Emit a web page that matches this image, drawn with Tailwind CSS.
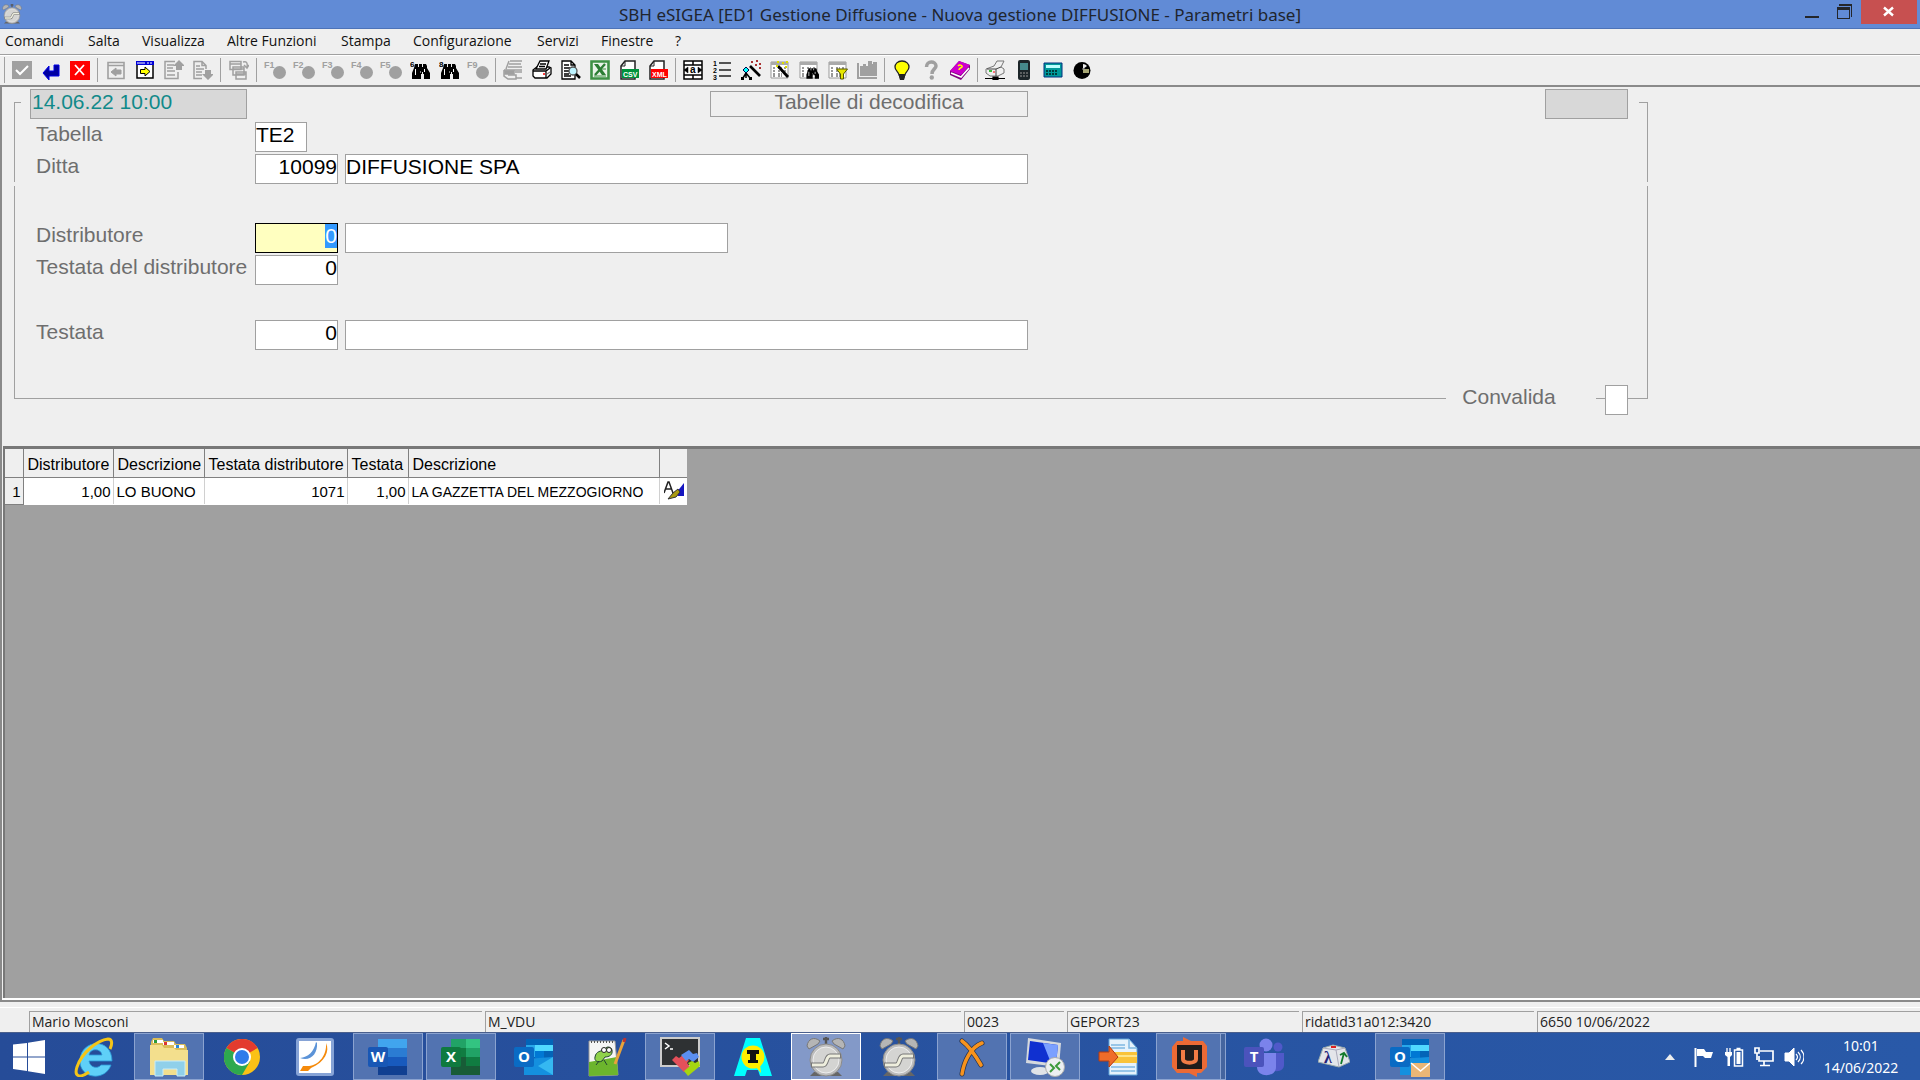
<!DOCTYPE html>
<html lang="it">
<head>
<meta charset="utf-8">
<title>SBH eSIGEA [ED1 Gestione Diffusione - Nuova gestione DIFFUSIONE - Parametri base]</title>
<script src="https://cdn.jsdelivr.net/npm/@tailwindcss/browser@4"></script>
</head>
<body class="min-h-screen flex flex-col bg-[#efefef] text-black font-['Open_Sans',sans-serif] overflow-hidden">

<!-- shared symbols -->
<svg class="hidden">
  <symbol id="alarm" viewBox="0 0 40 42">
    <path d="M1 10C2 3 8 0 14 5l-2 3-9 5zM39 10C38 3 32 0 26 5l2 3 9 5z" fill="#b5b5b5" stroke="#777" stroke-width="1"/>
    <path d="M17 3h6M20 1v7" stroke="#555" stroke-width="2.400" fill="none"/>
    <path d="M8 36l-4 4h32l-4-4z" fill="#666"/>
    <circle cx="20" cy="24" r="16" fill="#bdbdbd" stroke="#8b8b8b" stroke-width="1"/>
    <circle cx="20" cy="24" r="13" fill="#d4d4d2" stroke="#eee" stroke-width="1"/>
    <path d="M5 29h12c4 0 3-9 7-9h11" stroke="#777" stroke-width="5" fill="none"/>
    <path d="M6 29h11c4 0 3-9 7-9h10" stroke="#eeeedd" stroke-width="3" fill="none"/>
  </symbol>
  <symbol id="binoc" viewBox="0 0 20 20">
    <path d="M5 4h3v3h1V4h3v3h1V4h3l1 2v2l3 5v6h-6v-5h-1v-2h-1v2h-1v5H2v-6l2-5z" fill="#000"/>
    <path d="M5.500 9v6M14.500 9v3M10 12h1" stroke="#fff" stroke-width="1"/>
  </symbol>
  <symbol id="sheet" viewBox="0 0 20 20">
    <path d="M1 2h17v16H1z" fill="#fff" stroke="#999"/><path d="M1 2h17v3H1z" fill="#aaa"/>
    <path d="M3 8h3m2 0h4m2 0h3M3 11h3m2 0h4m2 0h3M3 14h3m2 0h4m2 0h3M3 16h3m2 0h4" stroke="#333" stroke-dasharray="2 1"/>
  </symbol>
</svg>

<header class="relative h-[29px] shrink-0 bg-[#618bd6] border-b border-[#4d73b8] flex items-center">
  <svg class="absolute left-0.5 top-[3px] w-5 h-[22px]"><use href="#alarm"/></svg>
  <h1 class="w-full text-center text-[17px] leading-7 pt-0.5 text-[#20252e] font-['Noto_Sans',sans-serif]">SBH eSIGEA [ED1 Gestione Diffusione - Nuova gestione DIFFUSIONE - Parametri base]</h1>
  <div class="absolute right-[3px] top-0 flex">
    <button aria-label="Riduci a icona" class="w-8 h-6"><svg viewBox="0 0 32 24" class="w-8 h-6"><path d="M8 17h14" stroke="#24262b" stroke-width="2"/></svg></button>
    <button aria-label="Ripristina" class="w-8 h-6"><svg viewBox="0 0 32 24" class="w-8 h-6" fill="none" stroke="#24262b" shape-rendering="crispEdges"><path d="M8 18.500V7h12v11.500zM8 8.500h12M10 5h12.500v12" stroke-width="1"/><path d="M8 8.500h12M10 5h13" stroke-width="2"/></svg></button>
    <button aria-label="Chiudi" class="w-14 h-6 bg-[#c75050]"><svg viewBox="0 0 56 24" class="w-14 h-6"><path d="M23 7.500l9 8m0-8l-9 8" stroke="#fff" stroke-width="2.400"/></svg></button>
  </div>
</header>

<nav class="h-[26px] shrink-0 border-b border-[#a0a0a0] flex items-center pl-[5px] pb-px text-[14px] leading-5 text-[#111] whitespace-nowrap">
  <a href="#" class="w-[83px]">Comandi</a><a href="#" class="w-[54px]">Salta</a><a href="#" class="w-[85px]">Visualizza</a><a href="#" class="w-[114px]">Altre Funzioni</a><a href="#" class="w-[72px]">Stampa</a><a href="#" class="w-[124px]">Configurazione</a><a href="#" class="w-16">Servizi</a><a href="#" class="w-[74px]">Finestre</a><a href="#">?</a>
</nav>

<div role="toolbar" class="h-[30px] shrink-0 border-t border-white flex items-center pl-1 pb-0.5">
  <i class="w-[3px] h-[26px] border-l border-[#a0a0a0]"></i>
  <button aria-label="Conferma" class="w-[29px] grid place-items-center"><svg class="w-5 h-5" viewBox="0 0 20 20"><path d="M0 1h20v18H0z" fill="#a0a0a0"/><path d="M4 10l4 4 8-8" stroke="#fff" stroke-width="2" fill="none"/></svg></button>
  <button aria-label="Invio" class="w-[29px] grid place-items-center"><svg class="w-5 h-5" viewBox="0 0 20 20"><path d="M2 13l6-7v5h5V5h5v11H8v4z" fill="#0000a0" stroke="#0000e8"/></svg></button>
  <button aria-label="Annulla" class="w-[29px] grid place-items-center"><svg class="w-5 h-5" viewBox="0 0 20 20"><path d="M0 1h20v19H0z" fill="red"/><path d="M5 5l9 10m0-10l-9 10" stroke="#fff" stroke-width="1.800"/></svg></button>
  <i class="w-[7px] h-6 flex justify-center"><b class="w-px bg-[#a0a0a0]"></b></i>
  <button aria-label="Finestra precedente" class="w-[29px] grid place-items-center"><svg class="w-5 h-5" viewBox="0 0 20 20" fill="none" stroke="#a0a0a0"><path d="M2 2.500h16v16H2zM2 5.500h16" stroke-width="1.600"/><path d="M5 12l5-4v2h5v4h-5v2z" fill="#a0a0a0"/></svg></button>
  <button aria-label="Finestra successiva" class="w-[29px] grid place-items-center"><svg class="w-5 h-5" viewBox="0 0 20 20"><path d="M2 3h16v15H2z" fill="#fff" stroke="#000" stroke-width="1.500"/><path d="M1 1h18v4H1z" fill="#0000d8"/><path d="M2 3h8m2 0h2m1 0h2" stroke="#fff"/><path d="M15 11.500l-5-4.500v2.500H5.500v4H10V16z" fill="#ff0" stroke="#000"/></svg></button>
  <button aria-label="Pagina su" class="w-[29px] grid place-items-center"><svg class="w-5 h-5" viewBox="0 0 20 20" fill="none" stroke="#a0a0a0"><path d="M11 1.500H1v17h13V12" stroke-width="1.500"/><path d="M3 5h7M3 8h6M3 11h8M3 15h8" stroke-width="1.300"/><path d="M15 0l6 6-3 0v4h-6V6l-3 0z" fill="#a0a0a0" stroke="none"/></svg></button>
  <button aria-label="Pagina giù" class="w-[29px] grid place-items-center"><svg class="w-5 h-5" viewBox="0 0 20 20" fill="none" stroke="#a0a0a0"><path d="M9 18.500H1v-17h8l4 4V9M9 1.500v4h4" stroke-width="1.500"/><path d="M3 6h4M3 9h8M3 12h6M3 15h6" stroke-width="1.300"/><path d="M15 20l6-6h-3v-4h-6v4H9z" fill="#a0a0a0" stroke="none"/></svg></button>
  <i class="w-[7px] h-6 flex justify-center"><b class="w-px bg-[#a0a0a0]"></b></i>
  <button aria-label="Cascata" class="w-[29px] grid place-items-center"><svg class="w-5 h-5" viewBox="0 0 20 20" fill="#efefef" stroke="#a0a0a0" stroke-width="1.500"><path d="M1 1.500h11v8H1zM1 4h11M4 7h11v8H4zM4 9h11M7 12h10v7H7zM7 14h10"/><path d="M14 2c3-1 5 0 4 6m-3-3l3 3 2-3" fill="none"/></svg></button>
  <i class="w-[7px] h-6 flex justify-center"><b class="w-px bg-[#a0a0a0]"></b></i>
  <button aria-label="F1" class="w-[29px] grid place-items-center"><svg class="w-6 h-5" viewBox="0 0 24 20" fill="#a0a0a0"><text x="1" y="8" font-size="9" font-weight="bold" font-family="Liberation Sans, sans-serif">F1</text><circle cx="16.500" cy="12.500" r="6.500"/></svg></button>
  <button aria-label="F2" class="w-[29px] grid place-items-center"><svg class="w-6 h-5" viewBox="0 0 24 20" fill="#a0a0a0"><text x="1" y="8" font-size="9" font-weight="bold" font-family="Liberation Sans, sans-serif">F2</text><circle cx="16.500" cy="12.500" r="6.500"/></svg></button>
  <button aria-label="F3" class="w-[29px] grid place-items-center"><svg class="w-6 h-5" viewBox="0 0 24 20" fill="#a0a0a0"><text x="1" y="8" font-size="9" font-weight="bold" font-family="Liberation Sans, sans-serif">F3</text><circle cx="16.500" cy="12.500" r="6.500"/></svg></button>
  <button aria-label="F4" class="w-[29px] grid place-items-center"><svg class="w-6 h-5" viewBox="0 0 24 20" fill="#a0a0a0"><text x="1" y="8" font-size="9" font-weight="bold" font-family="Liberation Sans, sans-serif">F4</text><circle cx="16.500" cy="12.500" r="6.500"/></svg></button>
  <button aria-label="F5" class="w-[29px] grid place-items-center"><svg class="w-6 h-5" viewBox="0 0 24 20" fill="#a0a0a0"><text x="1" y="8" font-size="9" font-weight="bold" font-family="Liberation Sans, sans-serif">F5</text><circle cx="16.500" cy="12.500" r="6.500"/></svg></button>
  <button aria-label="F6 cerca" class="w-[29px] grid place-items-center"><svg class="w-5 h-5" viewBox="0 0 20 20"><use href="#binoc"/><text x="0" y="7" font-size="8" font-weight="bold" font-family="Liberation Sans, sans-serif">6</text></svg></button>
  <button aria-label="F8 cerca" class="w-[29px] grid place-items-center"><svg class="w-5 h-5" viewBox="0 0 20 20"><use href="#binoc"/><text x="0" y="7" font-size="8" font-weight="bold" font-family="Liberation Sans, sans-serif">8</text></svg></button>
  <button aria-label="F9" class="w-[29px] grid place-items-center"><svg class="w-6 h-5" viewBox="0 0 24 20" fill="#a0a0a0"><text x="1" y="8" font-size="9" font-weight="bold" font-family="Liberation Sans, sans-serif">F9</text><circle cx="16.500" cy="12.500" r="6.500"/></svg></button>
  <i class="w-1.5 h-6 flex justify-center"><b class="w-px bg-[#a0a0a0]"></b></i>
  <button aria-label="Stampa multipla" class="w-[29px] grid place-items-center"><svg class="w-5 h-5" viewBox="0 0 20 20" fill="none" stroke="#a0a0a0" stroke-width="1.500"><path d="M7 1h12M6 4h12M5 7h14M6 1L3 9M1 10h18M1 10v6l4 3h8v-4H5M12 12h7M13 18h6"/><path d="M2 11h9v3H2z" fill="#a0a0a0"/></svg></button>
  <button aria-label="Stampa" class="w-[29px] grid place-items-center"><svg class="w-5 h-5" viewBox="0 0 20 20" fill="#fff" stroke="#000" stroke-width="1.300"><path d="M1 10l4-3h12l2 1v6l-4 4H3l-2-2z"/><path d="M4 9l4-8h9l-3 8zM8 4h6M7 6.500h6M1 11h13l4-3M14 11v7" fill="#fff"/><path d="M11 14h2" stroke="red"/><path d="M15 14l3-2" stroke="#888"/></svg></button>
  <button aria-label="Anteprima" class="w-[29px] grid place-items-center"><svg class="w-5 h-5" viewBox="0 0 20 20" fill="#fff" stroke="#000" stroke-width="1.300"><path d="M1 1h9l4 4v14H1zM10 1v4h4"/><path d="M3 5h5M3 8h6M3 11h5M3 14h5M3 16h7"/><circle cx="12" cy="11" r="4" fill="#bdf3ff" stroke="#555"/><path d="M15 14l4 4" stroke-width="2.500"/></svg></button>
  <button aria-label="Excel" class="w-[29px] grid place-items-center"><svg class="w-5 h-5" viewBox="0 0 20 20"><path d="M1.500 1.500h17v17h-17z" fill="#e9f3e9" stroke="#3e9145" stroke-width="2.600"/><path d="M4 4h4l8 11h-4z" fill="#2c7d34"/><path d="M15 4L5 15" stroke="#2c7d34" stroke-width="2.400"/><path d="M4 16h12M12 9h4" stroke="#3e9145"/></svg></button>
  <button aria-label="Esporta CSV" class="w-[29px] grid place-items-center"><svg class="w-5 h-5" viewBox="0 0 20 20"><path d="M6 1h10v18H2V6z" fill="#fff" stroke="#222" stroke-width="1.500"/><path d="M6 1v5H2" stroke="#222" fill="none"/><path d="M3 9h17v9H3z" fill="#00923c"/><text x="4" y="16.500" font-size="7" font-weight="bold" fill="#fff" font-family="Liberation Sans, sans-serif">CSV</text></svg></button>
  <button aria-label="Esporta XML" class="w-[29px] grid place-items-center"><svg class="w-5 h-5" viewBox="0 0 20 20"><path d="M6 1h10v18H2V6z" fill="#fff" stroke="#222" stroke-width="1.500"/><path d="M6 1v5H2" stroke="#222" fill="none"/><path d="M3 9h17v9H3z" fill="red"/><text x="4" y="16.500" font-size="7" font-weight="bold" fill="#fff" font-family="Liberation Sans, sans-serif">XML</text></svg></button>
  <i class="w-1.5 h-6 flex justify-center"><b class="w-px bg-[#a0a0a0]"></b></i>
  <button aria-label="Larghezza colonne" class="w-[29px] grid place-items-center"><svg class="w-5 h-5" viewBox="0 0 20 20" fill="#fff" stroke="#000" stroke-width="1.500"><path d="M1 1h18v18H1zM1 5h18M1 15h18M10 1v4M10 15v4"/><path d="M1 10l4-3v6zM19 10l-4-3v6z" fill="#000" stroke-width=".5"/><text x="7" y="13" font-size="10" font-weight="bold" fill="#000" stroke="none" font-family="Liberation Sans, sans-serif">a</text></svg></button>
  <button aria-label="Elenco" class="w-[29px] grid place-items-center"><svg class="w-5 h-5" viewBox="0 0 20 20"><path d="M7 3h12M7 10h12M7 16h12" stroke="#222" stroke-width="1.600"/><g font-size="7" font-weight="bold" font-family="Liberation Sans, sans-serif"><text x="1" y="6">1</text><text x="1" y="13">2</text><text x="1" y="20">3</text></g></svg></button>
  <button aria-label="Albero guidato" class="w-[29px] grid place-items-center"><svg class="w-5 h-5" viewBox="0 0 20 20" fill="none"><path d="M5 9v4l-3 5M5 13l4 5M5 13v5" stroke="#000" stroke-width="1.500"/><path d="M5 7l3 3-3 3-3-3z" fill="#0ff" stroke="#004"/><path d="M0 17h3v3H0zM8 17h3v3H8z" fill="#000"/><path d="M9 6l10 10" stroke="#000" stroke-width="2.600"/><path d="M10 2h2M15 1h2M14 5h2M18 4h2M18 8h2" stroke="#a33" stroke-width="2"/></svg></button>
  <button aria-label="Tabella guidata" class="w-[29px] grid place-items-center"><svg class="w-5 h-5" viewBox="0 0 20 20"><use href="#sheet"/><path d="M8 6l10 11" stroke="#000" stroke-width="2.800"/><path d="M7 2h2M12 3h2M16 2h2M6 6h2M15 7h2" stroke="#dd0" stroke-width="2"/></svg></button>
  <button aria-label="Cerca in tabella" class="w-[29px] grid place-items-center"><svg class="w-5 h-5" viewBox="0 0 20 20"><use href="#sheet"/><use href="#binoc" x="6" y="5" width="14" height="15"/></svg></button>
  <button aria-label="Filtra tabella" class="w-[29px] grid place-items-center"><svg class="w-5 h-5" viewBox="0 0 20 20"><use href="#sheet"/><path d="M8.500 9h11L15.500 14v5h-3v-5z" fill="#e6e600" stroke="#550"/></svg></button>
  <button aria-label="Grafico" class="w-[29px] grid place-items-center"><svg class="w-5 h-5" viewBox="0 0 20 20" fill="#a0a0a0"><path d="M0 3h2v14h18v2H0zM3 6h3V4h3v2h2V1h4v3h1V2h4v14H3z"/></svg></button>
  <i class="w-1.5 h-6 flex justify-center"><b class="w-px bg-[#a0a0a0]"></b></i>
  <button aria-label="Suggerimento" class="w-[29px] grid place-items-center"><svg class="w-5 h-5" viewBox="0 0 20 20"><path d="M10 1c4.500 0 7 3 7 6 0 4-4 5-4 8H7c0-3-4-4-4-8 0-3 2.500-6 7-6z" fill="#ff0" stroke="#222" stroke-width="1.300"/><path d="M7 14h6v3l-1 3H8l-1-3z" fill="#222"/></svg></button>
  <button aria-label="Guida" class="w-[29px] grid place-items-center"><svg class="w-5 h-5" viewBox="0 0 20 20"><path d="M5.500 7c0-7 9.500-6 9.500-1 0 3-4 3-4 8" fill="none" stroke="#a0a0a0" stroke-width="3.500"/><circle cx="10.800" cy="17.500" r="2.200" fill="#a0a0a0"/></svg></button>
  <button aria-label="Manuale" class="w-[29px] grid place-items-center"><svg class="w-5 h-5" viewBox="0 0 20 20"><path d="M0 11L9 1l11 4v4l-9 11L0 15z" fill="#800080"/><path d="M0 11L9 1l11 4-9 10z" fill="#c0c"/><path d="M1 13l10 4 8-9" stroke="#fff" stroke-width="1.600" fill="none"/><path d="M8 6c2-2 5 0 4 1s-3 1-3 3" stroke="#ff0" stroke-width="1.500" fill="none"/></svg></button>
  <i class="w-1.5 h-6 flex justify-center"><b class="w-px bg-[#a0a0a0]"></b></i>
  <button aria-label="Stampante di rete" class="w-[29px] grid place-items-center"><svg class="w-5 h-5" viewBox="0 0 20 20"><path d="M1 9l8-3 3-5h7l-3 6 3 2v4l-6 3H5l-4-3z" fill="#f0f0f0" stroke="#777"/><path d="M2 9h9l5-2M11 9v7" stroke="#444" fill="none"/><path d="M4 11h3" stroke="#0a0" stroke-width="1.500"/><path d="M8 12h2" stroke="red"/><path d="M0 18.500h20M8 17h5v3H8z" stroke="#000" stroke-width="1.200"/></svg></button>
  <button aria-label="Telefono" class="w-[29px] grid place-items-center"><svg class="w-5 h-5" viewBox="0 0 20 20"><rect x="4" y="0" width="12" height="20" rx="2" fill="#1c2529"/><path d="M6 3h8v7H6z" fill="#458a8c"/><path d="M6 13h2m1 0h2m1 0h2M6 16h2m1 0h2m1 0h2" stroke="#999"/></svg></button>
  <button aria-label="Calcolatrice" class="w-[29px] grid place-items-center"><svg class="w-5 h-5" viewBox="0 0 20 20"><path d="M1 3h18v14H1z" fill="#009a9a" stroke="#003080"/><path d="M3 5h14v3H3z" fill="#bff"/><path d="M3 11h2m1 0h2m1 0h2m1 0h2M3 14h2m1 0h2m1 0h2m1 0h2" stroke="#022" stroke-width="1.500"/></svg></button>
  <button aria-label="Orologio" class="w-[29px] grid place-items-center"><svg class="w-5 h-5" viewBox="0 0 20 20"><circle cx="10" cy="10.500" r="8.500"/><path d="M11 4v5l4-3a6 6 0 0 0-4-2" fill="#eee"/><path d="M11 10h6M11 12h6" stroke="#dd9" stroke-width="1.500"/><path d="M10 9h3" stroke="#999"/></svg></button>
</div>

<main class="grow flex flex-col border-t-2 border-l-2 border-[#8a8a8a] pt-px font-['Liberation_Sans',Arial,sans-serif]">
  <form class="relative w-[85%] min-w-[1100px] pt-px pl-[28px] pr-1 text-[21px] leading-6 text-[#6e6e6e]" onsubmit="return false">
    <!-- group frame: broken line round the fields -->
    <div class="absolute left-3 -right-4 top-3.5 h-20 border-l border-r border-[#a0a0a0] flex justify-between"><i class="w-1.5 border-t border-[#a0a0a0]"></i><i class="w-2 border-t border-[#a0a0a0]"></i></div>
    <div class="absolute left-3 -right-4 top-[98px] h-[213px] border border-t-0 border-[#a0a0a0]"></div>

    <div class="relative flex justify-between">
      <input aria-label="Data e ora" readonly value="14.06.22 10:00" class="w-[217px] h-[30px] pb-1 pl-px bg-[#d8d8d8] border border-[#a0a0a0] text-[#118a8a] outline-none">
      <input aria-label="Stato" readonly class="w-[83px] h-[30px] bg-[#d8d8d8] border border-[#a0a0a0] outline-none">
      <h2 class="absolute left-[680px] top-0.5 w-[318px] h-[26px] border border-[#a0a0a0] text-center leading-[20px]">Tabelle di decodifica</h2>
    </div>
    <div class="relative mt-[3px] flex">
      <label for="tab" class="w-[225px] pl-1.5">Tabella</label>
      <input id="tab" value="TE2" class="w-[52px] h-[30px] pb-1 bg-white border border-[#a0a0a0] text-black outline-none">
    </div>
    <div class="relative mt-0.5 flex">
      <label for="ditta" class="w-[225px] pl-1.5">Ditta</label>
      <input id="ditta" value="10099" class="w-[83px] h-[30px] pb-1 bg-white border border-[#a0a0a0] text-black text-right outline-none">
      <input aria-label="Ragione sociale" value="DIFFUSIONE SPA" class="ml-[7px] w-[683px] h-[30px] pb-1 bg-white border border-[#a0a0a0] text-black outline-none">
    </div>
    <div class="relative mt-[39px] flex">
      <label for="distr" class="w-[225px] pl-1.5">Distributore</label>
      <input id="distr" autofocus value="0" class="w-[83px] h-[30px] pb-1 bg-[#ffffc0] border border-black text-black text-right outline-none selection:bg-[#3399ff] selection:text-white">
      <input aria-label="Descrizione distributore" class="ml-[7px] w-[383px] h-[30px] bg-white border border-[#a0a0a0] outline-none">
    </div>
    <div class="relative mt-0.5 flex">
      <label for="testd" class="w-[225px] pl-1.5">Testata del distributore</label>
      <input id="testd" value="0" class="w-[83px] h-[30px] pb-1 bg-white border border-[#a0a0a0] text-black text-right outline-none">
    </div>
    <div class="relative mt-[35px] flex">
      <label for="test" class="w-[225px] pl-1.5">Testata</label>
      <input id="test" value="0" class="w-[83px] h-[30px] pb-1 bg-white border border-[#a0a0a0] text-black text-right outline-none">
      <input aria-label="Descrizione testata" class="ml-[7px] w-[683px] h-[30px] bg-white border border-[#a0a0a0] outline-none">
    </div>
    <div class="relative mt-[35px] flex justify-end">
      <label for="conv" class="w-[150px] pl-4 bg-[#efefef]">Convalida</label>
      <i class="w-[9px]"></i>
      <input id="conv" type="checkbox" class="appearance-none w-[23px] h-[30px] bg-white border border-[#a0a0a0]">
    </div>
  </form>

  <section class="mt-[31px] ml-px grow border-t-[3px] border-l-2 border-[#787878] bg-[#a0a0a0]">
    <table class="table-fixed border-collapse w-[682px] bg-white text-[15px] leading-5 whitespace-nowrap">
      <colgroup><col class="w-[18px]"><col class="w-[90px]"><col class="w-[91px]"><col class="w-[143px]"><col class="w-[61px]"><col class="w-[251px]"><col class="w-[28px]"></colgroup>
      <thead>
        <tr class="h-7 bg-[#efefef] text-left text-[16px]">
          <th class="border-r border-b border-[#808080]"></th><th class="border-r border-b border-[#808080] font-normal pl-1 pt-1">Distributore</th><th class="border-r border-b border-[#808080] font-normal pl-1 pt-1">Descrizione</th><th class="border-r border-b border-[#808080] font-normal pl-1 pt-1">Testata distributore</th><th class="border-r border-b border-[#808080] font-normal pl-1 pt-1">Testata</th><th class="border-r border-b border-[#808080] font-normal pl-1 pt-1">Descrizione</th><th class="border-b border-[#808080]"></th>
        </tr>
      </thead>
      <tbody>
        <tr class="h-[27px]">
          <th class="font-normal bg-[#efefef] border-r border-b border-[#808080] text-right pr-0.5 pt-0.5">1</th><td class="border-r border-[#d0d0d0] text-right pr-0.5 pt-0.5">1,00</td><td class="border-r border-[#d0d0d0] pl-[3px] pt-0.5">LO BUONO</td><td class="border-r border-[#d0d0d0] text-right pr-0.5 pt-0.5">1071</td><td class="border-r border-[#d0d0d0] text-right pr-0.5 pt-0.5">1,00</td><td class="border-r border-[#d0d0d0] pl-[3px] pt-0.5 text-[14px]">LA GAZZETTA DEL MEZZOGIORNO</td>
          <td><button aria-label="Modifica riga" class="block ml-1"><svg class="w-5 h-5" viewBox="0 0 20 20"><path d="M0 12L4 1h1l4 11M2 8h6" stroke="#222" stroke-width="1.500" fill="none"/><path d="M20 2v13h-6l-2-3z" fill="#1515c0"/><path d="M4 18l5-6 5-4 2 3-4 5z" fill="#aa9a10" stroke="#333"/></svg></button></td>
        </tr>
      </tbody>
    </table>
  </section>
  <div class="h-0.5 bg-white"></div>
</main>

<footer class="h-8 shrink-0 border-t-2 border-[#8a8a8a] flex flex-col">
  <div class="h-[7px] border-b border-white"></div>
  <div class="grow mt-[3px] pl-[29px] flex gap-[3px] text-[14px] leading-5 text-[#222] whitespace-nowrap">
    <span class="w-[453px] border-t border-l border-[#a0a0a0] pl-0.5">Mario Mosconi</span>
    <span class="w-[476px] border-t border-l border-[#a0a0a0] pl-0.5">M_VDU</span>
    <span class="w-[100px] border-t border-l border-[#a0a0a0] pl-0.5">0023</span>
    <span class="w-[232px] border-t border-l border-[#a0a0a0] pl-0.5">GEPORT23</span>
    <span class="w-[232px] border-t border-l border-[#a0a0a0] pl-0.5">ridatid31a012:3420</span>
    <span class="grow border-t border-l border-[#a0a0a0] pl-0.5">6650 10/06/2022</span>
  </div>
</footer>

<div class="h-12 shrink-0 bg-linear-to-r from-[#264c98] to-[#2959a8] border-t border-[#4a5f8c] flex items-center justify-between">
  <div class="flex items-center gap-[3px]">
    <button aria-label="Start" class="w-[58px] grid place-items-center"><svg class="w-8 h-[34px]" viewBox="0 0 32 34" fill="#fff"><path d="M0 4.500L14 3v13.500H0zM15 2.800L32 0v16.500H15zM0 17.500h14V31L0 29zM15 17.500h17V34l-17-2.800z"/></svg></button>
    <button aria-label="Internet Explorer" class="w-[70px] h-[47px] pr-1 grid place-items-center"><svg class="w-10 h-10" viewBox="0 0 40 40"><path fill-rule="evenodd" d="M38 24H15c1 7 9 8 12 4h10C31 45 5 42 6 23 7 2 38 0 38 24zM15 18h13c-1-7-12-7-13 0z" fill="#5fd0f8" stroke="#2a9bd8" stroke-width=".8"/><path d="M15 35C5 42 0 39 3 30 8 15 24 3 34 2c5 0 4 6 2 10" fill="none" stroke="#f5c518" stroke-width="3"/></svg></button>
    <button aria-label="Esplora file" class="w-[70px] h-[47px] grid place-items-center bg-[#5273b1] border border-[#8ba3d0]"><svg class="w-10 h-10" viewBox="0 0 40 40"><path d="M2 5l2-4h9l2 3h10l2 3h9l2 4v27H2z" fill="#d9bd5a"/><path d="M4 3h10v3H4zM14 5h11v3H14zM25 8h10v3H25z" fill="#fff"/><path d="M5 3h3v3H5z" fill="#2a9a3c"/><path d="M15 5h3v3h-3z" fill="#d33"/><path d="M27 8h3v3h-3z" fill="#28d"/><path d="M1 8h12l2 3h10l2 2h12v25H1z" fill="#f3df8d"/><path d="M6 24h30v15h-8v-7H14v7H6z" fill="#8fd0ea" stroke="#c9ecf8"/></svg></button>
    <button aria-label="Chrome" class="w-[70px] h-[47px] grid place-items-center"><svg class="w-9 h-9" viewBox="0 0 36 36"><circle cx="18" cy="18" r="18" fill="#fbc116"/><path d="M18 18L2.400 9a18 18 0 0 1 31.200 0z" fill="#e33b2e"/><path d="M2.400 9a18 18 0 0 0 15.600 27l8-13.500L18 18z" fill="#2da94f"/><circle cx="18" cy="18" r="9" fill="#fff"/><circle cx="18" cy="18" r="7" fill="#2f7bea"/></svg></button>
    <button aria-label="Foxit Reader" class="w-[70px] h-[47px] grid place-items-center"><svg class="w-10 h-10" viewBox="0 0 40 40"><rect x="1" y="1" width="38" height="38" rx="3" fill="#86a3d6"/><rect x="4" y="4" width="32" height="32" fill="#fff"/><path d="M21 5C19 15 13 20 5 21c10 4 18-4 17-15z" fill="#5b93d8"/><path d="M31 6c1 12-7 22-17 23H8l-3 5h8l3-3c14-6 19-17 15-25z" fill="#f58a0b"/></svg></button>
    <button aria-label="Word" class="w-[70px] h-[47px] grid place-items-center bg-[#5273b1] border border-[#8ba3d0]"><svg class="w-10 h-10" viewBox="0 0 40 40"><path d="M10 2h29v9H10z" fill="#41a5ee"/><path d="M10 11h29v9H10z" fill="#2b7cd3"/><path d="M10 20h29v9H10z" fill="#185abd"/><path d="M10 29h29v9H10z" fill="#103f91"/><rect y="10" width="20" height="20" rx="2" fill="#1857b5"/><text x="10" y="25" text-anchor="middle" font-size="15" font-weight="bold" fill="#fff">W</text></svg></button>
    <button aria-label="Excel" class="w-[70px] h-[47px] grid place-items-center bg-[#5273b1] border border-[#8ba3d0]"><svg class="w-10 h-10" viewBox="0 0 40 40"><path d="M10 2h15v18H10z" fill="#21a366"/><path d="M25 2h14v9H25z" fill="#33c481"/><path d="M25 11h14v9H25z" fill="#21a366"/><path d="M10 11h15v9H10z" fill="#107c41"/><path d="M10 20h29v18H10z" fill="#185c37"/><path d="M25 20h14v9H25z" fill="#107c41"/><rect y="10" width="20" height="20" rx="2" fill="#0f7a3f"/><text x="10" y="25" text-anchor="middle" font-size="15" font-weight="bold" fill="#fff">X</text></svg></button>
    <button aria-label="Outlook" class="w-[70px] h-[47px] grid place-items-center"><svg class="w-10 h-10" viewBox="0 0 40 40"><path d="M12 2h27v19H12z" fill="#0364b8"/><path d="M12 8h18v12H12z" fill="#28a8ea"/><path d="M21 8h9v6h-9zM30 8h9v6h-9z" fill="#50d9ff"/><path d="M21 14h9v7h-9z" fill="#0078d4"/><path d="M10 22l29-2v18H10z" fill="#1490df"/><path d="M39 20L24 29l15 9z" fill="#35b8f1"/><rect y="10" width="20" height="20" rx="2" fill="#0a6bc4"/><text x="10" y="25" text-anchor="middle" font-size="15" font-weight="bold" fill="#fff">O</text></svg></button>
    <button aria-label="Notepad++" class="w-[70px] h-[47px] grid place-items-center"><svg class="w-10 h-10" viewBox="0 0 40 40"><path d="M2 4h26l3 34-29 1z" fill="#f5f5f5" stroke="#999"/><path d="M2 25l28-5 1 18-29 1z" fill="#6cb52d"/><path d="M4 5h23" stroke="#555" stroke-width="2" stroke-dasharray="1 2"/><path d="M8 20c1-6 6-6 10-7 0-4 6-4 7 0 1 5-3 7-7 7l-3 4c-4 2-8 0-7-4zm4 4l-3 4m8-5l3 5" fill="#8fd14a" stroke="#243" stroke-width="1"/><circle cx="17" cy="13" r="2.500" fill="#fff" stroke="#222"/><circle cx="22" cy="13" r="2.500" fill="#fff" stroke="#222"/><path d="M37 3l-9 24" stroke="#e8a33a" stroke-width="3"/><path d="M38 1l-1 4" stroke="#b33" stroke-width="3"/></svg></button>
    <button aria-label="MobaXterm" class="w-[70px] h-[47px] grid place-items-center bg-[#5273b1] border border-[#8ba3d0]"><svg class="w-10 h-10" viewBox="0 0 40 40"><path d="M1 1h38v28H1z" fill="#2e3133" stroke="#ccc" stroke-width="2"/><path d="M5 6l4 3-4 3M10 12h3" stroke="#fff" stroke-width="1.500" fill="none"/><path d="M12 23l4-4 3 2 4-3 6 5-2 3 3 4-6 5z" fill="#e4505a"/><path d="M21 18l8-5 4 4 4-1 2 4-6 5-4-3-3 2z" fill="#5b8ff0"/><path d="M24 34l6-5-2-3 4-2 3 2 4-2 1 5-12 10z" fill="#a5d610"/></svg></button>
    <button aria-label="Assistente" class="w-[70px] h-[47px] grid place-items-center"><svg class="w-10 h-10" viewBox="0 0 40 40"><path d="M13 1h14l12 38H27l-2-6H14l-2 6H1z" fill="#0ff"/><circle cx="20" cy="20" r="11.500" fill="#fe0"/><path d="M22 29l6 7-1-9z" fill="#fe0"/><path d="M14 13h12v4h-3v6h2v3H15v-3h2v-6h-3z" fill="#111"/></svg></button>
    <button aria-label="eSIGEA" class="w-[70px] h-[47px] grid place-items-center bg-[#8399c8] border border-white"><svg class="w-10 h-[42px]"><use href="#alarm"/></svg></button>
    <button aria-label="eSIGEA avvio" class="w-[70px] h-[47px] grid place-items-center"><svg class="w-10 h-[42px]"><use href="#alarm"/></svg></button>
    <button aria-label="X server" class="w-[70px] h-[47px] grid place-items-center bg-[#5273b1] border border-[#8ba3d0]"><svg class="w-10 h-10" viewBox="0 0 40 40" fill="none" stroke-linecap="round"><path d="M10 4c7 5 12 12 19 24M30 6C19 10 12 24 10 37" stroke="#26324d" stroke-width="5"/><path d="M10 4c7 5 12 12 19 24M30 6C19 10 12 24 10 37" stroke="#f7931e" stroke-width="3.600"/></svg></button>
    <button aria-label="Desktop remoto" class="w-[70px] h-[47px] grid place-items-center bg-[#5273b1] border border-[#8ba3d0]"><svg class="w-10 h-10" viewBox="0 0 40 40"><path d="M3 1l33 5-2 24L1 26z" fill="#d5d9de"/><path d="M5 4l28 4-2 19L3 23z" fill="#1030d0"/><path d="M18 6l15 2-2 19-5-1z" fill="#7ba0ff"/><ellipse cx="15" cy="34" rx="9" ry="4" fill="#dfe3e8"/><circle cx="30" cy="30" r="9.500" fill="#eceff1" stroke="#aaa"/><path d="M25 27l4 4-4 4M35 25l-4 4 4 4" stroke="#3a9a3a" stroke-width="2" fill="none"/></svg></button>
    <button aria-label="Esporta" class="w-[70px] h-[47px] grid place-items-center"><svg class="w-10 h-10" viewBox="0 0 40 40"><path d="M11 2h20l8 9v27H11z" fill="#e6f2fb" stroke="#5fa3d8"/><path d="M31 2v9h8M13 30h24M13 34h24M13 8h14M13 11h14" stroke="#7fb8e2" stroke-width="1.500" fill="none"/><path d="M11 15h28v11H11z" fill="#f9c33a"/><path d="M11 19h28" stroke="#fde48a" stroke-width="2"/><path d="M1 15h10v-6l9 11-9 10v-6H1z" fill="#ef6c2a" stroke="#b33a10"/></svg></button>
    <button aria-label="Uniface" class="w-[70px] h-[47px] flex bg-[#45659f] border border-[#8ba3d0]"><span class="w-16 h-full grid place-items-center bg-[#5273b1] border-r border-[#8ba3d0]"><svg class="w-10 h-10" viewBox="0 0 40 40"><path d="M8 4h6V0l8 4h12l4 5v21l-6 6h-4v4l-8-4H8l-5-6V10z" fill="#ec6a35"/><path d="M8 8h25v24H8z" fill="#211c1a"/><path d="M14 13v9c0 5 13 5 13 0v-9" stroke="#f27c45" stroke-width="4" fill="none"/></svg></span></button>
    <button aria-label="Teams" class="w-[70px] h-[47px] grid place-items-center"><svg class="w-10 h-10" viewBox="0 0 40 40"><circle cx="22" cy="8" r="6.500" fill="#7b83eb"/><circle cx="34" cy="10" r="4.500" fill="#5059c9"/><path d="M28 16h12v12c0 5-6 8-12 5z" fill="#5059c9"/><path d="M13 16h19v14c0 11-19 11-19 0z" fill="#7b83eb"/><rect y="10" width="20" height="20" rx="2" fill="#4b53bc"/><text x="10" y="25" text-anchor="middle" font-size="15" font-weight="bold" fill="#fff">T</text></svg></button>
    <button aria-label="Lambda" class="w-[70px] h-[47px] pr-1.5 grid place-items-center"><svg class="w-8 h-8" viewBox="0 0 32 32"><path d="M5 7l10-3 12 3 5 14-11 5L0 21z" fill="#e3e5ea" stroke="#9aa"/><path d="M5 7l13 2 9-2M18 9l3 17" stroke="#aab" fill="none"/><path d="M13 6h5" stroke="#d22" stroke-width="2"/><text x="6" y="22" font-size="16" font-weight="bold" fill="#22227a" font-family="Liberation Serif, serif">λ</text><path d="M23 23l3-11m-4 2l4-2 3 4" stroke="#127a2a" stroke-width="1.800" fill="none"/></svg></button>
    <button aria-label="Outlook posta" class="w-[70px] h-[47px] grid place-items-center bg-[#5273b1] border border-[#8ba3d0]"><svg class="w-10 h-10" viewBox="0 0 40 40"><path d="M12 2h27v19H12z" fill="#0364b8"/><path d="M12 8h18v12H12z" fill="#28a8ea"/><path d="M21 8h9v6h-9zM30 8h9v6h-9z" fill="#50d9ff"/><path d="M21 14h9v7h-9z" fill="#0078d4"/><path d="M10 22l29-2v18H10z" fill="#1490df"/><rect y="10" width="20" height="20" rx="2" fill="#0a6bc4"/><text x="10" y="25" text-anchor="middle" font-size="15" font-weight="bold" fill="#fff">O</text><path d="M21 26h19v14H21z" fill="#eab676"/><path d="M21 26l9.500 8 9.500-8" stroke="#fff" stroke-width="1.500" fill="none"/></svg></button>
  </div>
  <div class="flex items-center pr-4">
    <button aria-label="Mostra icone nascoste" class="mr-[19px]"><svg class="w-2.5 h-1.5" viewBox="0 0 10 6"><path d="M5 0l5 6H0z" fill="#eee"/></svg></button>
    <button aria-label="Centro operativo" class="mr-2.5"><svg class="w-5 h-5" viewBox="0 0 20 20"><path d="M1.500 1v19" stroke="#fff" stroke-width="2"/><path d="M3 2h7l2 3h7l-2 6h-6l-2-2H3z" fill="#fff"/></svg></button>
    <button aria-label="Alimentazione" class="mr-2.5"><svg class="w-5 h-5" viewBox="0 0 20 20" fill="none" stroke="#fff"><path d="M3 1v4m3-4v4" stroke-width="1.300"/><path d="M1 5h7v3L6 10v9H3.500v-9L1 8z" fill="#fff" stroke="none"/><path d="M10.500 3h8v16h-8zM12.500 1.500h4" stroke-width="1.500"/><path d="M12.500 5h4v12h-4z" fill="#fff" stroke="none"/></svg></button>
    <button aria-label="Rete" class="mr-2.5"><svg class="w-5 h-5" viewBox="0 0 20 20" fill="none" stroke="#fff" stroke-width="1.700"><path d="M6 4h13v10H5V9M10 14v4M6 18.500h10M1 1h4v5H1zM3 6v7"/></svg></button>
    <button aria-label="Volume" class="mr-3.5"><svg class="w-5 h-5" viewBox="0 0 20 20" fill="none" stroke="#fff"><path d="M1 6h4l5-5v18l-5-5H1z" fill="#fff"/><path d="M12 7c2 2 2 4 0 6m2-8c3 3 3 7 0 10m3-12c4 4 4 10 0 14" stroke-width="1.200"/></svg></button>
    <time class="w-[86px] text-center text-[14px] leading-[22px] text-white font-['Noto_Sans',sans-serif]">10:01<br>14/06/2022</time>
  </div>
</div>

<script>
  const distr = document.getElementById('distr');
  distr.focus();
  distr.select();
</script>
</body>
</html>
